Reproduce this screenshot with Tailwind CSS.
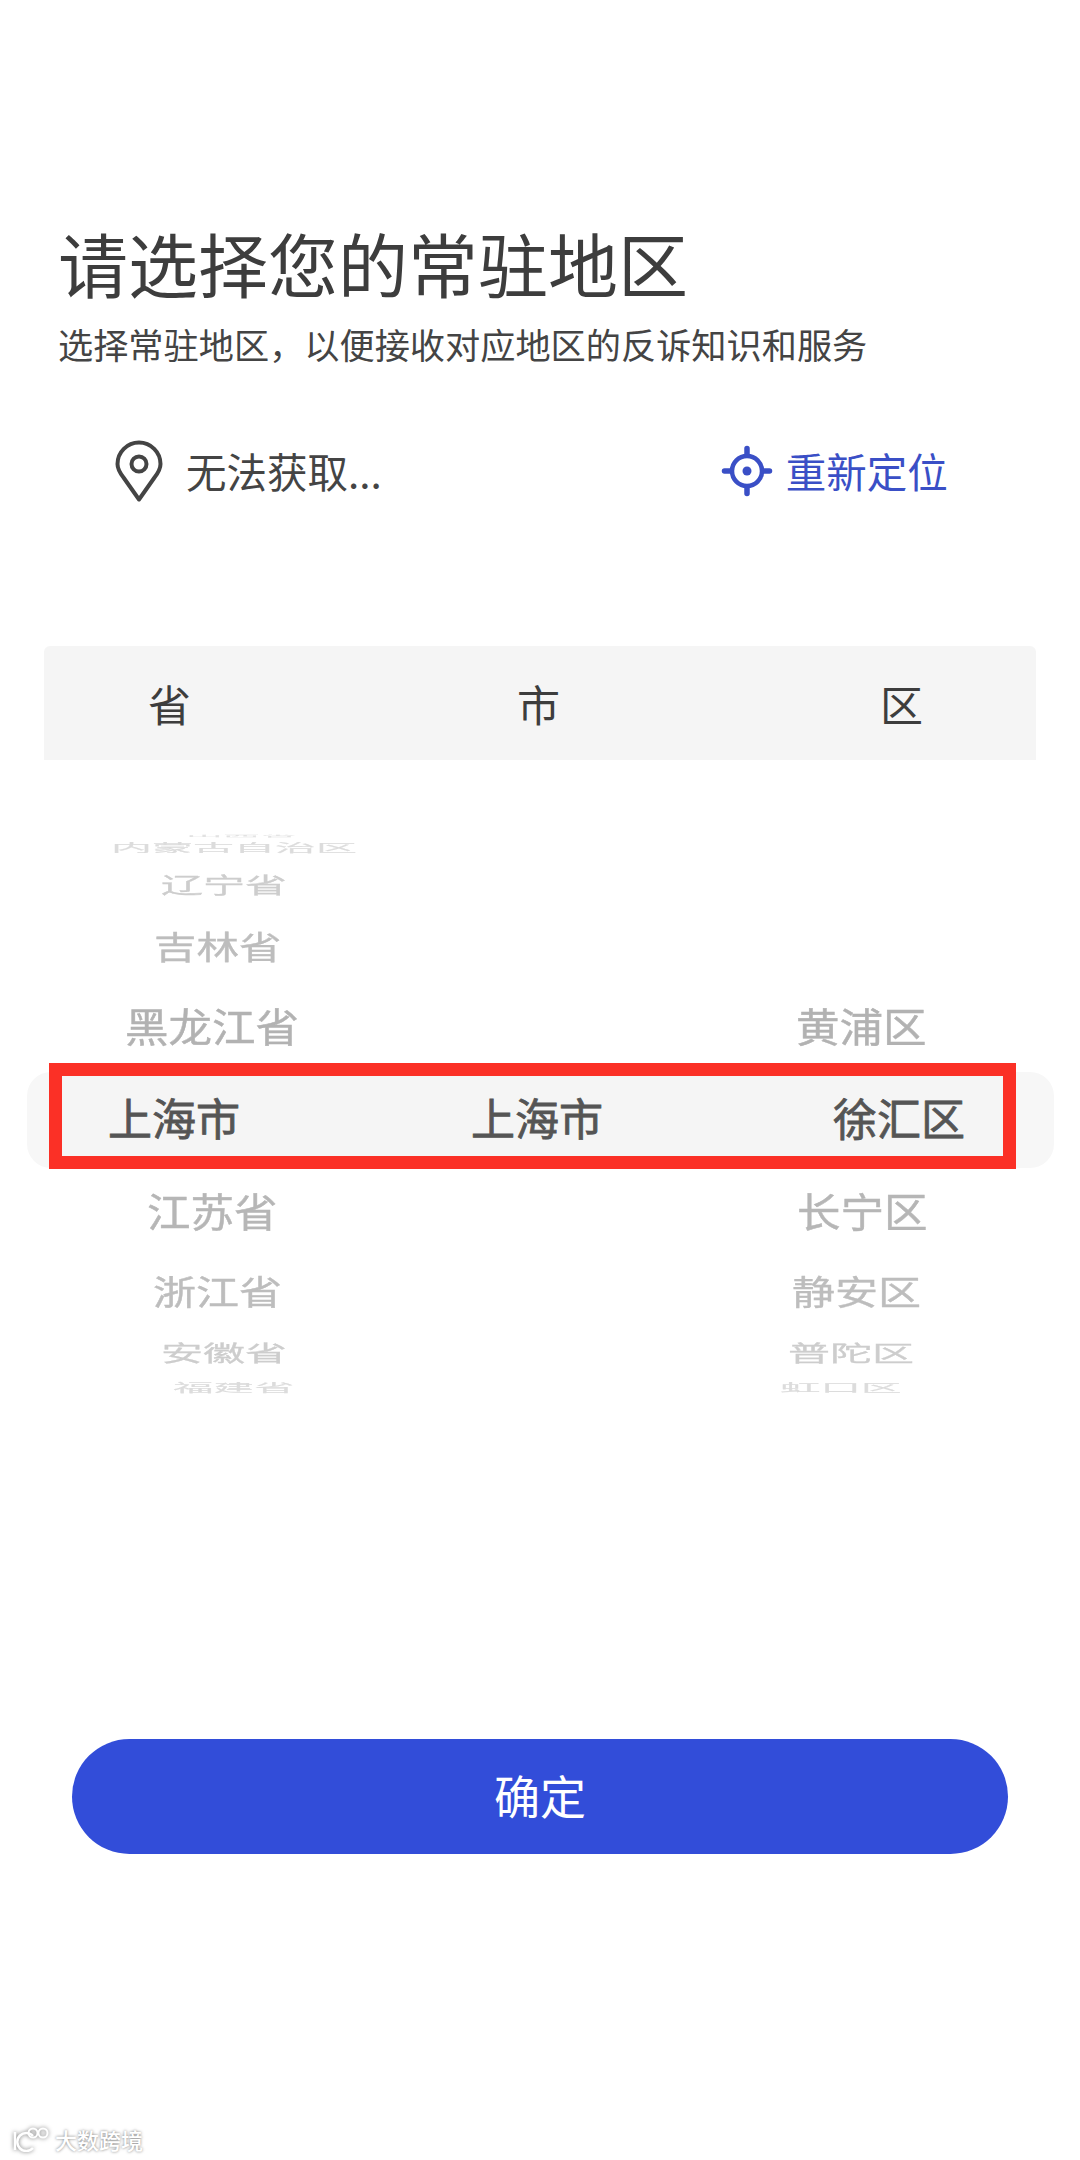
<!DOCTYPE html>
<html lang="zh-CN">
<head>
<meta charset="utf-8">
<script src="https://cdn.jsdelivr.net/npm/@tailwindcss/browser@4"></script>
</head>
<body class="bg-white">
<main class="relative flex h-[2160px] w-[1080px] flex-col overflow-hidden bg-white font-['Noto_Sans_CJK_SC','Noto_Sans',sans-serif] text-[#444]">
  <header class="pl-[58px] pt-[228px]">
    <h1 class="text-[70px] leading-[70px] font-normal text-[#3d3d3d]">请选择您的常驻地区</h1>
    <p class="mt-[28px] whitespace-nowrap text-[35.2px] leading-[35px] text-[#444]">选择常驻地区，以便接收对应地区的反诉知识和服务</p>
  </header>

  <section class="mt-[78px] flex h-[64px] items-center">
    <svg class="ml-[114px] h-[64px] w-[50px]" viewBox="0 0 50 64" fill="none" stroke="#444" stroke-width="4" stroke-linejoin="round">
      <path d="M25 60.5 L9.5 38.5 C6 34 3.5 30 3.5 25 A21.5 21.5 0 0 1 46.5 25 C46.5 30 44 34 40.5 38.5 Z"/>
      <circle cx="25" cy="25" r="7.5"/>
    </svg>
    <span class="ml-[22px] text-[40.5px] leading-none">无法获取...</span>
    <svg class="ml-[337px] h-[56px] w-[56px]" viewBox="0 0 56 56" fill="none" stroke="#3a4fc6">
      <circle cx="28" cy="28" r="15" stroke-width="4.5"/>
      <circle cx="28" cy="28" r="4.5" fill="#3a4fc6" stroke="none"/>
      <path d="M28 5.5V12M28 44V50.5M5.5 28H12M44 28H50.5" stroke-width="5.5" stroke-linecap="round"/>
    </svg>
    <span class="ml-[11px] text-[40.5px] leading-none text-[#3a4fc6]">重新定位</span>
  </section>

  <section class="mx-[44px] mt-[143px] flex h-[114px] items-center rounded-t-[6px] bg-[#f5f5f5] text-[43px] leading-none text-[#3d3d3d]">
    <span class="ml-[104px]">省</span>
    <span class="ml-[326px]">市</span>
    <span class="ml-[320px]">区</span>
  </section>

  <section class="mt-[73px] flex flex-col leading-none [-webkit-text-stroke:0.5px_currentColor]">
    <div class="grid h-[6px] grid-cols-[360px_360px_360px] content-center items-center text-[37px] text-[#e2e2e2]">
      <span class="ml-[186px] scale-y-[0.06]">山西省</span>
    </div>
    <div class="grid h-[16px] grid-cols-[360px_360px_360px] content-center items-center text-[41px] text-[#dcdcdc]">
      <span class="ml-[111px] w-[250px] scale-y-[0.28] whitespace-nowrap">内蒙古自治区</span>
    </div>
    <div class="grid h-[58px] grid-cols-[360px_360px_360px] content-center items-center text-[42px] text-[#cdcdcd]">
      <span class="ml-[161px] scale-y-[0.52]">辽宁省</span>
    </div>
    <div class="grid h-[64px] grid-cols-[360px_360px_360px] content-center items-center text-[42.5px] text-[#bdbdbd]">
      <span class="ml-[154px] scale-y-[0.76]">吉林省</span>
    </div>
    <div class="grid h-[96px] grid-cols-[360px_360px_360px] content-center items-center text-[43.5px] text-[#b2b2b2]">
      <span class="ml-[125px] scale-y-[0.92]">黑龙江省</span>
      <span class="col-start-3 ml-[76px] scale-y-[0.92]">黄浦区</span>
    </div>
    <div class="relative grid h-[88px] grid-cols-[360px_360px_360px] content-center items-center text-[44px] text-[#555] [-webkit-text-stroke:0.8px_#555]">
      <div class="absolute left-[27px] top-[-1px] h-[96px] w-[1027px] rounded-[24px] bg-[#f7f7f7]"></div>
      <div class="absolute left-[49px] top-[-10px] h-[106px] w-[967px] border-[13px] border-[#fb3026] bg-[#f5f5f5]"></div>
      <span class="relative ml-[108px]">上海市</span>
      <span class="relative ml-[111px]">上海市</span>
      <span class="relative ml-[113px]">徐汇区</span>
    </div>
    <div class="grid h-[98px] grid-cols-[360px_360px_360px] content-center items-center text-[43.5px] text-[#b6b6b6]">
      <span class="ml-[147px] scale-y-[0.92]">江苏省</span>
      <span class="col-start-3 ml-[77px] scale-y-[0.92]">长宁区</span>
    </div>
    <div class="grid h-[62px] grid-cols-[360px_360px_360px] content-center items-center text-[43px] text-[#bdbdbd]">
      <span class="ml-[153px] scale-y-[0.78]">浙江省</span>
      <span class="col-start-3 ml-[72px] scale-y-[0.78]">静安区</span>
    </div>
    <div class="grid h-[62px] grid-cols-[360px_360px_360px] content-center items-center text-[42px] text-[#cdcdcd]">
      <span class="ml-[161px] scale-y-[0.52]">安徽省</span>
      <span class="col-start-3 ml-[68px] scale-y-[0.52]">普陀区</span>
    </div>
    <div class="grid h-[8px] grid-cols-[360px_360px_360px] content-center items-center text-[40.5px] text-[#dcdcdc]">
      <span class="ml-[173px] scale-y-[0.28]">福建省</span>
      <span class="col-start-3 ml-[60px] scale-y-[0.28]">虹口区</span>
    </div>
  </section>

  <button class="mx-[72px] mt-[348px] flex h-[115px] w-[936px] items-center justify-center rounded-full bg-[#324dd9] pb-[6px] text-[46px] leading-none text-white">确定</button>

  <footer class="absolute left-[11px] top-[2126px] flex items-center text-white">
    <svg class="h-[26px] w-[40px] drop-shadow-[0_0_2px_#777]" viewBox="0 0 40 26" fill="none" stroke="#fff" stroke-width="2.5">
      <path d="M4 6V24"/>
      <path d="M22 10A9 9 0 1 0 22 22"/>
      <ellipse cx="22" cy="7" rx="4.5" ry="4.5" stroke-width="2"/>
      <ellipse cx="32" cy="7" rx="4.5" ry="4.5" stroke-width="2"/>
    </svg>
    <span class="ml-[4px] text-[22px] leading-none font-medium [text-shadow:0_0_3px_#777]">大数跨境</span>
  </footer>
</main>
</body>
</html>
